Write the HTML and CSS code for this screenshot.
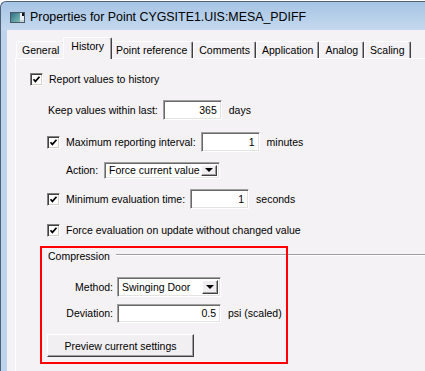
FILE: index.html
```html
<!DOCTYPE html>
<html lang="en">
<head>
    <meta charset="UTF-8">
    <meta name="viewport" content="width=device-width, initial-scale=1.0">
    <title>Properties for Point</title>
    <link rel="stylesheet" href="styles.css">
</head>
<body>
    <div class="window">
        <div class="titlebar">
            <svg class="app-icon" width="15" height="11" viewBox="0 0 15 11">
                <defs>
                    <linearGradient id="ig" x1="0" y1="0" x2="1" y2="1">
                        <stop offset="0" stop-color="#2f6f86"/>
                        <stop offset="1" stop-color="#7fc0b8"/>
                    </linearGradient>
                </defs>
                <rect x="0.5" y="0.5" width="14" height="10" fill="#e8eef4" stroke="#4a5866"/>
                <rect x="1" y="1" width="9" height="9" fill="url(#ig)"/>
                <rect x="12" y="1" width="2" height="3" fill="#111"/>
                <rect x="10" y="8" width="4" height="2" fill="#c8d4dc"/>
            </svg>
            <span class="title">Properties for Point CYGSITE1.UIS:MESA_PDIFF</span>
        </div>

        <div class="dialog">
            <ul class="tabs">
                <li>General</li>
                <li class="active">History</li>
                <li>Point reference</li>
                <li>Comments</li>
                <li>Application</li>
                <li>Analog</li>
                <li>Scaling</li>
            </ul>

            <div class="panel">
                <div class="row">
                    <span class="check"><svg width="9" height="9" viewBox="0 0 9 9"><polyline points="1.5,4.2 3.4,6.4 7.5,1.8" fill="none" stroke="#000" stroke-width="1.7"/></svg></span>
                    <span>Report values to history</span>
                </div>

                <div class="row row-keep">
                    <span>Keep values within last:</span>
                    <span class="input">365</span>
                    <span class="unit">days</span>
                </div>

                <div class="row row-max">
                    <span class="check"><svg width="9" height="9" viewBox="0 0 9 9"><polyline points="1.5,4.2 3.4,6.4 7.5,1.8" fill="none" stroke="#000" stroke-width="1.7"/></svg></span>
                    <span>Maximum reporting interval:</span>
                    <span class="input">1</span>
                    <span class="unit">minutes</span>
                </div>

                <div class="row row-action">
                    <span>Action:</span>
                    <span class="select select-action">
                        <span class="select-value">Force current value</span>
                        <span class="select-btn"><i class="arrow"></i></span>
                    </span>
                </div>

                <div class="row row-min">
                    <span class="check"><svg width="9" height="9" viewBox="0 0 9 9"><polyline points="1.5,4.2 3.4,6.4 7.5,1.8" fill="none" stroke="#000" stroke-width="1.7"/></svg></span>
                    <span>Minimum evaluation time:</span>
                    <span class="input">1</span>
                    <span class="unit">seconds</span>
                </div>

                <div class="row row-force">
                    <span class="check"><svg width="9" height="9" viewBox="0 0 9 9"><polyline points="1.5,4.2 3.4,6.4 7.5,1.8" fill="none" stroke="#000" stroke-width="1.7"/></svg></span>
                    <span>Force evaluation on update without changed value</span>
                </div>

                <div class="group-title">
                    <span>Compression</span>
                    <span class="group-line"></span>
                </div>

                <div class="row row-method">
                    <span class="field-label">Method:</span>
                    <span class="select select-method">
                        <span class="select-value">Swinging Door</span>
                        <span class="select-btn"><i class="arrow"></i></span>
                    </span>
                </div>

                <div class="row row-deviation">
                    <span class="field-label">Deviation:</span>
                    <span class="input input-wide">0.5</span>
                    <span class="unit">psi (scaled)</span>
                </div>

                <button class="preview-btn">Preview current settings</button>

                <!-- red annotation drawn over the compression group -->
                <div class="highlight"></div>
            </div>
        </div>
    </div>
</body>
</html>
```

FILE: styles.css
```css
* {
    margin: 0;
    padding: 0;
    box-sizing: border-box;
}

html, body {
    width: 425px;
    height: 371px;
    overflow: hidden;
}

body {
    background-color: #fff;
    font-family: 'Liberation Sans', Arial, sans-serif;
    font-size: 10.5px;
    color: #000;
}

.window {
    display: flex;
    flex-direction: column;
    width: 425px;
    height: 370px;
    margin-top: 1px;
    border: 1px solid #4f6177;
    border-right: none;
    border-bottom: none;
    border-radius: 6px 0 0 0;
    padding: 0 0 0 6px;
    background: linear-gradient(to bottom, #a6c4e4 0, #c4d9ef 28px, #bdd4ec 28px);
}

.titlebar {
    display: flex;
    align-items: center;
    height: 28px;
    padding-left: 3px;
    padding-top: 2px;
}

.app-icon {
    margin-right: 5px;
}

.title {
    font-size: 12.4px;
    color: #000;
}

.dialog {
    flex: 1;
    display: flex;
    flex-direction: column;
    background-color: #f5f2f5;
    padding: 7px 0 0 8px;
}

.tabs {
    display: flex;
    align-items: flex-end;
    list-style: none;
    height: 21px;
    padding-left: 1px;
}

.tabs li {
    height: 17px;
    line-height: 16px;
    padding: 0 5px;
    border-top: 1px solid #fff;
    border-left: 1px solid #fff;
    border-right: 1px solid #404040;
    border-radius: 2px 2px 0 0;
    box-shadow: inset -1px 0 #a0a0a0;
    white-space: nowrap;
}

.tabs li.active {
    position: relative;
    z-index: 1;
    height: 22px;
    line-height: 17px;
    margin: 0 -2px -1px -2px;
    padding: 0 7px;
    background-color: #f5f2f5;
}

.panel {
    position: relative;
    flex: 1;
    border-top: 1px solid #fff;
    border-left: 1px solid #fff;
    padding: 10px 0 0 14px;
}

.row {
    display: flex;
    align-items: center;
    height: 20px;
    white-space: nowrap;
}

.row-keep {
    margin-top: 11px;
    padding-left: 18px;
}

.row-max {
    margin-top: 12px;
    padding-left: 17px;
}

.row-action {
    margin-top: 8px;
    padding-left: 36px;
}

.row-min {
    margin-top: 9px;
    padding-left: 17px;
}

.row-force {
    margin-top: 11px;
    padding-left: 17px;
}

.row-method {
    margin-top: 11px;
    padding-left: 18px;
}

.row-deviation {
    margin-top: 6px;
    padding-left: 18px;
}

.check {
    display: flex;
    align-items: center;
    justify-content: center;
    width: 13px;
    height: 13px;
    margin-right: 6px;
    background-color: #fff;
    border: 1px solid;
    border-color: #808080 #fff #fff #808080;
    box-shadow: inset 1px 1px #404040, inset -1px -1px #d4d0c8;
}

.input {
    width: 59px;
    height: 20px;
    line-height: 18px;
    margin-left: 5px;
    padding-right: 4px;
    text-align: right;
    background-color: #fff;
    border: 1px solid;
    border-color: #a0a0a0 #fff #fff #a0a0a0;
    box-shadow: inset 1px 1px #696969, inset -1px -1px #e3e3e3;
}

.input-wide {
    width: 104px;
    height: 19px;
    margin-left: 4px;
    line-height: 17px;
}

.unit {
    margin-left: 7px;
}

.select {
    display: flex;
    align-items: center;
    width: 116px;
    height: 17px;
    margin-left: 6px;
    padding: 2px;
    background-color: #fff;
    border: 1px solid;
    border-color: #a0a0a0 #fff #fff #a0a0a0;
    box-shadow: inset 1px 1px #696969, inset -1px -1px #e3e3e3;
}

.select-method {
    width: 104px;
    height: 20px;
    margin-left: 4px;
}

.select-value {
    flex: 1;
    padding-left: 2px;
    overflow: hidden;
}

.select-btn {
    display: flex;
    align-items: center;
    justify-content: center;
    flex: none;
    width: 16px;
    height: 100%;
    background-color: #f0eef0;
    border: 1px solid;
    border-color: #fff #404040 #404040 #fff;
    box-shadow: inset -1px -1px #a0a0a0;
}

.arrow {
    width: 0;
    height: 0;
    border-left: 4px solid transparent;
    border-right: 4px solid transparent;
    border-top: 4px solid #000;
}

.field-label {
    width: 65px;
    text-align: right;
}

.group-title {
    display: flex;
    align-items: center;
    height: 20px;
    margin-top: 6px;
    padding-left: 18px;
}

.group-line {
    flex: 1;
    margin-left: 6px;
    margin-top: -3px;
    border-top: 1px solid #a0a0a0;
    border-bottom: 1px solid #fff;
}

.preview-btn {
    display: block;
    width: 147px;
    height: 23px;
    margin: 11px 0 0 17px;
    font-family: inherit;
    font-size: 10.5px;
    color: #000;
    background-color: #f2eff2;
    border: 1px solid;
    border-color: #fff #404040 #404040 #fff;
    box-shadow: inset -1px -1px #a0a0a0;
}

.highlight {
    position: absolute;
    left: 24px;
    top: 187px;
    width: 248px;
    height: 118px;
    border: 2px solid #f00;
}
```
